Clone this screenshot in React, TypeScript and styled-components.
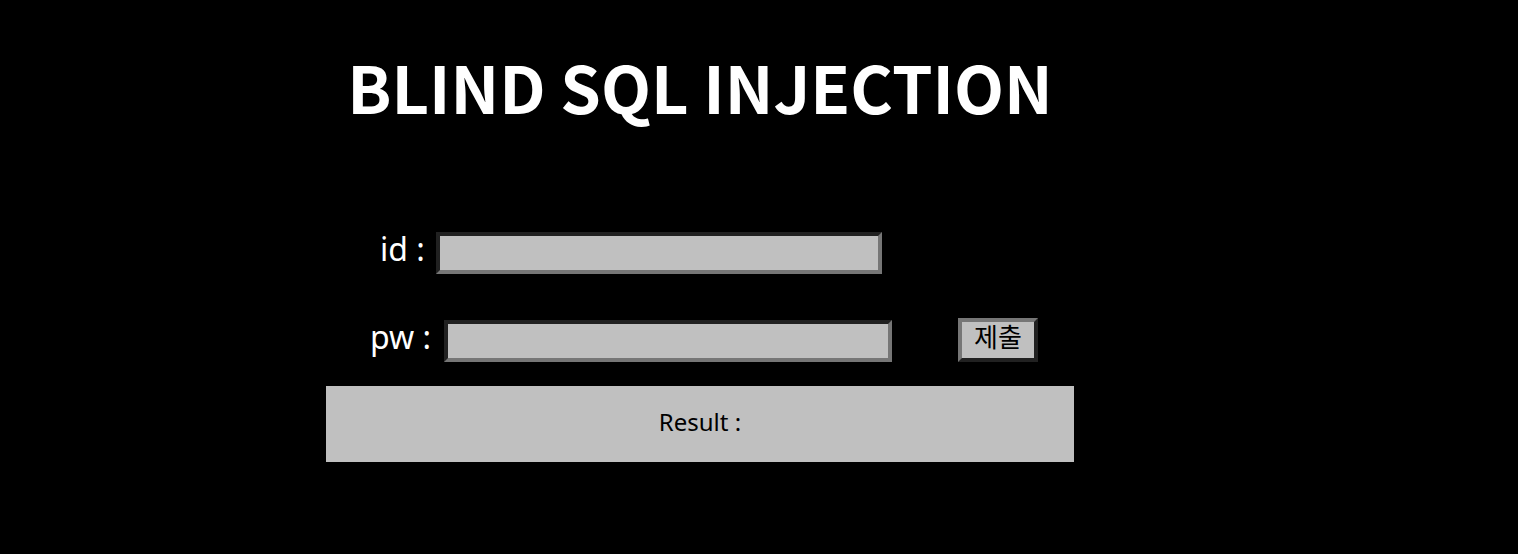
import React, { useState } from "react";
import styled, { createGlobalStyle } from "styled-components";

const GlobalStyle = createGlobalStyle`
  body {
    margin: 0;
    background: #000;
    color: #fff;
    font-family: "Noto Sans", "Noto Sans CJK KR", sans-serif;
  }
  * { box-sizing: border-box; }
`;

const Page = styled.main`
  display: flex;
  flex-direction: column;
  align-items: center;
  padding: 38px 118px 40px 0;
`;

const Title = styled.h1`
  margin: 0;
  font-family: "Noto Sans CJK KR", sans-serif;
  font-size: 65px;
  line-height: 96px;
  font-weight: 700;
  white-space: nowrap;
`;

const Form = styled.form`
  width: 748px;
  max-width: 100%;
  margin-top: 98px;
`;

const Row = styled.div<{ $indent: number }>`
  display: flex;
  align-items: flex-end;
  padding-left: ${(p) => p.$indent}px;
  & + & { margin-top: 44px; }
`;

const Label = styled.label<{ $width: number }>`
  width: ${(p) => p.$width}px;
  padding-bottom: 8px;
  font-size: 32px;
  line-height: 34px;
  white-space: nowrap;
`;

const Field = styled.input<{ $width: number }>`
  width: ${(p) => p.$width}px;
  height: 42px;
  padding: 0 8px;
  border: 4px inset #767676;
  border-radius: 0;
  background: #c0c0c0;
  color: #000;
  font: inherit;
  font-size: 24px;
  outline: none;
`;

const Submit = styled.button`
  width: 80px;
  height: 44px;
  margin-left: 66px;
  padding: 0 0 8px;
  border: 4px outset #767676;
  border-radius: 0;
  background: #c0c0c0;
  color: #000;
  font-family: "Noto Sans CJK KR", sans-serif;
  font-size: 26px;
  line-height: 28px;
`;

const Result = styled.output`
  display: block;
  margin-top: 24px;
  padding: 18px 20px 22px;
  background: #c0c0c0;
  color: #000;
  font-size: 24px;
  line-height: 36px;
  text-align: center;
`;

export default function App() {
  const [id, setId] = useState("");
  const [pw, setPw] = useState("");
  return (
    <>
      <GlobalStyle />
      <Page>
        <Title>BLIND SQL INJECTION</Title>
        <Form onSubmit={(e) => e.preventDefault()}>
          <Row $indent={54}>
            <Label htmlFor="id" $width={56}>id :</Label>
            <Field id="id" $width={446} value={id} onChange={(e) => setId(e.target.value)} />
          </Row>
          <Row $indent={44}>
            <Label htmlFor="pw" $width={74}>pw :</Label>
            <Field id="pw" $width={448} value={pw} onChange={(e) => setPw(e.target.value)} />
            <Submit type="submit">제출</Submit>
          </Row>
          <Result>Result :</Result>
        </Form>
      </Page>
    </>
  );
}
